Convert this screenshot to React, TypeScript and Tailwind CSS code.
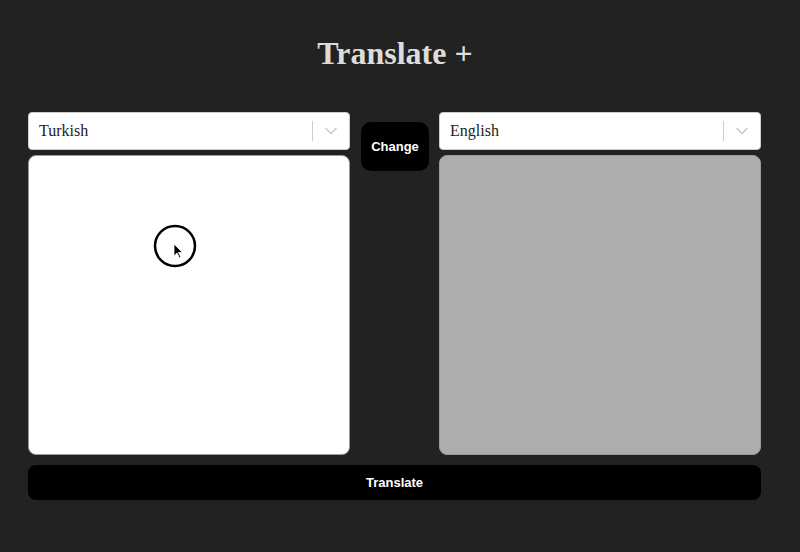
import { ChevronDown } from 'lucide-react';

function LangSelect({ value }: { value: string }) {
  return (
    <div className="flex h-[38px] items-center rounded-[4px] border border-[#cccccc] bg-white">
      <div className="flex-1 pl-[10px] text-[16px] text-[#222222] font-['Liberation_Serif',serif]">{value}</div>
      <div className="h-[20px] w-px bg-[#cccccc]" />
      <div className="flex w-[36px] justify-center text-[#cccccc]">
        <ChevronDown size={20} strokeWidth={2} />
      </div>
    </div>
  );
}

export default function App() {
  return (
    <div className="min-h-[552px] bg-[#222222] pt-[34px]">
      <h1 className="mr-[10px] text-center text-[32px] font-bold leading-[38px] text-[#dcdcdc] font-['Liberation_Serif',serif]">
        Translate +
      </h1>
      <div className="ml-[28px] mt-[40px] w-[733px]">
        <div className="flex">
          <div className="flex w-[322px] flex-col gap-[5px]">
            <LangSelect value="Turkish" />
            <div className="relative h-[300px] rounded-[8px] border border-[#9a9a9a] bg-white">
              {/* click indicator from the screen recording */}
              <svg className="absolute left-[123px] top-[67px]" width="46" height="46" viewBox="0 0 46 46">
                <circle cx="23" cy="23" r="20" fill="none" stroke="#000" strokeWidth="2.5" />
                <path d="M22 21 L22 33 L25 30 L27.5 35 L29 34.3 L26.5 29.5 L30.5 29.5 Z" fill="#000" stroke="#fff" strokeWidth="0.8" />
              </svg>
            </div>
          </div>
          <div className="ml-[11px] mr-[10px] w-[68px] pt-[10px]">
            <button className="h-[49px] w-[68px] rounded-[10px] bg-black text-[13px] font-bold text-white font-['Liberation_Sans',sans-serif]">
              Change
            </button>
          </div>
          <div className="flex w-[322px] flex-col gap-[5px]">
            <LangSelect value="English" />
            <div className="h-[300px] rounded-[8px] border border-[#9a9a9a] bg-[#adadad]" />
          </div>
        </div>
        <button className="mt-[10px] h-[35px] w-full rounded-[8px] bg-black text-[13px] font-bold text-white font-['Liberation_Sans',sans-serif]">
          Translate
        </button>
      </div>
    </div>
  );
}
